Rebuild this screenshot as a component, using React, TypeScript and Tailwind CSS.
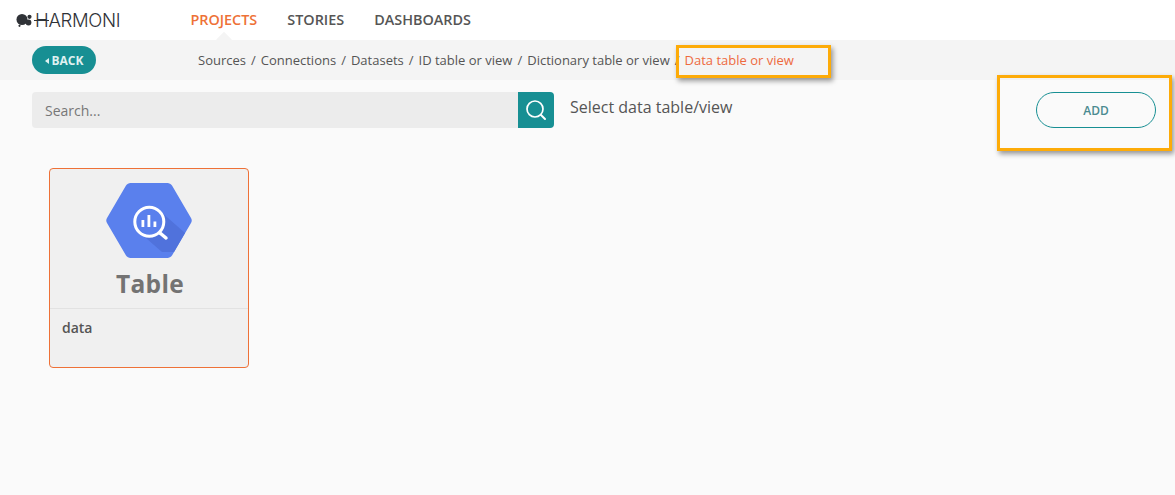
import React from "react";

const crumbs = ["Sources", "Connections", "Datasets", "ID table or view", "Dictionary table or view"];

const Logo: React.FC = () => (
  <div className="flex items-center">
    <svg width="19" height="14" viewBox="0 0 19 14">
      <circle cx="6" cy="6.500" r="5.500" fill="#2f3237" />
      <circle cx="12.500" cy="9.500" r="2.900" fill="#2f3237" />
      <circle cx="13.500" cy="3.800" r="2.100" fill="#2f3237" />
      <circle cx="3.500" cy="12.800" r="1.100" fill="#2f3237" />
    </svg>
    <span className="relative text-[18.500px] leading-none tracking-[-0.3px] text-[#2f3237] font-['Inter',sans-serif] font-light">
      <span className="absolute left-[-1px] top-[9px] h-px w-[15px] bg-[#2f3237]" />
      HARMONI
    </span>
  </div>
);

const BigQueryIcon: React.FC = () => (
  <svg width="86" height="75" viewBox="0 0 86 75">
    <path
      d="M20 2.500C21 1 22.800 0 24.500 0H61.500C63.200 0 65 1 66 2.500L85 35C86 36.700 86 38.300 85 40L66 72.500C65 74 63.200 75 61.500 75H24.500C22.800 75 21 74 20 72.500L1 40C0 38.300 0 36.700 1 35Z"
      fill="#5a80ed"
    />
    <path d="M54 28L79 50L68 69H56L33 49Z" fill="#5072dc" />
    <circle cx="43.300" cy="38.700" r="14.500" fill="#5a80ed" stroke="#fff" strokeWidth="3" />
    <path d="M54 50L60 55" stroke="#fff" strokeWidth="3.500" strokeLinecap="round" />
    <rect x="35.500" y="37" width="2.800" height="7" fill="#fff" />
    <rect x="41.500" y="32" width="2.800" height="12" fill="#fff" />
    <rect x="47.500" y="38.500" width="2.800" height="5.500" fill="#fff" />
  </svg>
);

export default function App() {
  return (
    <div className="relative h-[495px] w-[1175px] overflow-hidden bg-[#fafafa] font-['Open_Sans',sans-serif]">
      <nav className="flex h-10 items-center bg-white pl-4">
        <Logo />
        <div className="ml-[70px] flex items-center gap-[30px] text-[14.400px] font-semibold text-[#555]">
          <span className="relative text-[#ee7137]">
            PROJECTS
            <span className="absolute left-1/2 top-[25px] size-[11px] -translate-x-1/2 rotate-45 bg-[#f4f4f4]" />
          </span>
          <span>STORIES</span>
          <span>DASHBOARDS</span>
        </div>
      </nav>

      <div className="flex h-10 items-center bg-[#f4f4f4] pl-8">
        <button className="flex h-7 w-16 items-center justify-center gap-[3px] rounded-full bg-[#178f93] pt-px text-xs font-bold text-[#dff1f1]">
          <span className="h-0 w-0 border-y-[3.500px] border-r-[4px] border-y-transparent border-r-[#dff1f1]" />
          BACK
        </button>
        <div className="ml-[102px] flex items-center pt-px text-[13px] text-[#555]">
          {crumbs.map((c) => (
            <React.Fragment key={c}>
              <span>{c}</span>
              <span className="mx-[5px]">/</span>
            </React.Fragment>
          ))}
          <span className="text-[#ee6a3f]">Data table or view</span>
        </div>
      </div>

      <div className="flex items-start pl-8 pr-[19px] pt-3">
        <div className="flex h-9 w-[522px]">
          <div className="flex flex-1 items-center rounded-l-[4px] bg-[#ececec] pl-[13px] pt-px text-sm text-[#777]">
            Search...
          </div>
          <div className="flex w-9 items-center justify-center rounded-r-[4px] bg-[#178f93]">
            <svg width="24" height="24" viewBox="0 0 24 24" fill="none" stroke="#fff">
              <circle cx="11" cy="11" r="8" strokeWidth="1.700" />
              <path d="M17 17L21 21" strokeWidth="2" strokeLinecap="round" />
            </svg>
          </div>
        </div>
        <span className="ml-4 mt-[3px] text-base leading-[24px] text-[#555]">Select data table/view</span>
        <button className="ml-auto h-9 w-[120px] rounded-full border border-[#178f93] pt-px text-xs font-semibold text-[#4a8a90]">
          ADD
        </button>
      </div>

      <div className="ml-[49px] mt-10 h-[200px] w-[200px] rounded-[4px] border border-[#ee7137] bg-[#f0f0f0]">
        <div className="flex h-[140px] flex-col items-center border-b border-[#e2e2e2] pt-[14px]">
          <BigQueryIcon />
          <span className="ml-[2px] mt-[9px] text-[24.500px] font-bold leading-[34px] tracking-[0.3px] text-[#737373]">Table</span>
        </div>
        <div className="pl-3 pt-[9px] text-sm font-semibold leading-5 text-[#555]">data</div>
      </div>

      <div className="absolute left-[676px] top-[45px] h-[33px] w-[155px] border-[3px] border-[#fdab08] shadow-[2px_3px_5px_rgba(0,0,0,0.4)]" />
      <div className="absolute left-[997px] top-[75px] h-[76px] w-[175px] border-[3px] border-[#fdab08] shadow-[2px_3px_5px_rgba(0,0,0,0.4)]" />
    </div>
  );
}
